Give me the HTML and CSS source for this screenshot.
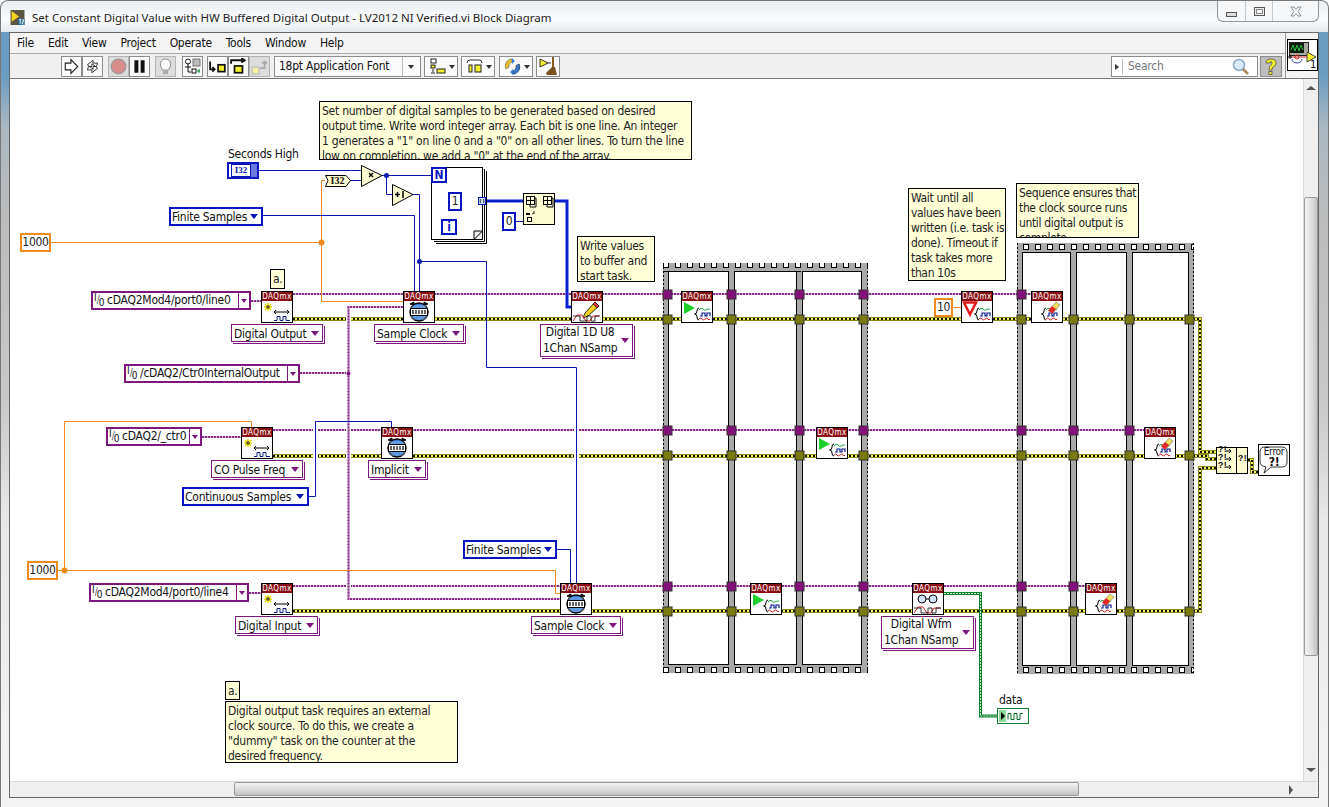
FILE: index.html
```html
<!DOCTYPE html>
<html lang="en">
<head>
    <meta charset="UTF-8">
    <title>Set Constant Digital Value with HW Buffered Digital Output - LV2012 NI Verified.vi Block Diagram</title>
    <link rel="stylesheet" href="styles.css">
</head>
<body>
<!-- shared icons -->
<svg class="defs" width="0" height="0">
    <defs>
        <pattern id="film" width="12" height="9" patternUnits="userSpaceOnUse">
            <rect width="12" height="9" fill="#a9a9a9"/>
            <rect x="3.500" y="1.500" width="5" height="5" fill="#fff" stroke="#000"/>
        </pattern>
        <symbol id="i-create" viewBox="0 0 30 21">
            <path d="M6 2v8M2 6h8M3 3l6 6M9 3l-6 6" stroke="#e8d800" stroke-width="1.500"/>
            <path d="M6 4v4M4 6h4" stroke="#333"/>
            <path d="M12 11h15M14 9l-2 2 2 2M25 9l2 2-2 2" fill="none" stroke="#000"/>
            <path d="M12 19.500h3v-4h3v4h3v-4h3v4h4" fill="none" stroke="#0a1a80"/>
        </symbol>
        <symbol id="i-clock" viewBox="0 0 30 21">
            <path d="M6 3l4-2v3zM24 3l-4-2v3z" fill="#000" stroke="#000"/>
            <circle cx="15" cy="11" r="9" fill="#2f78d8" stroke="#000" stroke-width="1.500"/>
            <path d="M8 5h14M6 7h18M6 16h18M8 18h14" stroke="#bcd8f8" stroke-width=".7"/>
            <rect x="6.500" y="7.500" width="17" height="7" fill="#fff" stroke="#000"/>
            <path d="M9 9v4M12 9v4M15 9v4M18 9v4M21 9v4" stroke="#000" stroke-width="1.200"/>
        </symbol>
        <symbol id="i-write" viewBox="0 0 30 21">
            <path d="M23 1l4 4-11 10-5 2 2-5z" fill="#f0d020" stroke="#000" stroke-width=".8"/>
            <path d="M21 3l4 4 2-2-4-4z" fill="#e03030" stroke="#000" stroke-width=".6"/>
            <path d="M1 20l4-6h5l4 6h4l3-5h6" fill="none" stroke="#d02020"/>
            <path d="M1 15h7v5h7v-5h4v5h4v-5h5" fill="none" stroke="#000" stroke-width=".8"/>
        </symbol>
        <symbol id="i-wave" viewBox="0 0 30 21">
            <path d="M17 7q-2 0-2 3 0 3-2.500 3 2.500 0 2.500 3 0 3 2 3" fill="none" stroke="#000"/>
            <path d="M17 9q2-3 4-1t3 1 4-1" fill="none" stroke="#20a040"/>
            <path d="M18 15h2v-3h3v3h2v-3h3v3" fill="none" stroke="#0a1a90" stroke-width="1.200"/>
            <path d="M17 18q2-2 3 0t3 0 3 0 2 0" fill="none" stroke="#d02020"/>
        </symbol>
        <symbol id="i-start" viewBox="0 0 30 21">
            <path d="M2 1l11 6-11 6z" fill="#1ed02c"/>
            <use href="#i-wave" width="30" height="21"/>
        </symbol>
        <symbol id="i-wait" viewBox="0 0 30 21">
            <path d="M2 1.500h12l-6 12z" fill="#fff" stroke="#e01818" stroke-width="2.500"/>
            <use href="#i-wave" width="30" height="21"/>
        </symbol>
        <symbol id="i-stop" viewBox="0 0 30 21">
            <use href="#i-wave" x="-3" width="30" height="21"/>
            <path d="M24 1l4 3-7 8-4-3z" fill="#f0e060" stroke="#555" stroke-width=".5"/>
            <path d="M20 5l4 3-4 4.500-4-3z" fill="#e02828"/>
        </symbol>
        <symbol id="i-read" viewBox="0 0 30 21">
            <circle cx="9" cy="6" r="4" fill="#cfe4f6" stroke="#000"/>
            <circle cx="20" cy="6" r="4" fill="#cfe4f6" stroke="#000"/>
            <path d="M13 6h3" stroke="#000"/>
            <path d="M1 20l4-6h5l4 6h4l3-5h7" fill="none" stroke="#d02020"/>
            <path d="M1 15h7v5h7v-5h4v5h4v-5h5" fill="none" stroke="#000" stroke-width=".8"/>
        </symbol>
    </defs>
</svg>

<div class="window">
    <header class="titlebar">
        <svg class="app-icon" width="15" height="15" viewBox="0 0 13 14">
            <rect width="13" height="14" fill="#5a5440"/>
            <path d="M1 1l7 5-7 5z" fill="#f2d21c"/>
            <rect x="7" y="8" width="6" height="6" fill="#2a6c98"/>
            <path d="M8 9h2M9 9v4M11 9h1v2h-1v2h1" stroke="#fff" stroke-width=".8" fill="none"/>
        </svg>
        <span class="title-text">Set Constant Digital Value with HW Buffered Digital Output - LV2012 NI Verified.vi Block Diagram</span>
        <div class="caption-btns">
            <div class="cap-btn cap-min"><i></i></div>
            <div class="cap-btn cap-max"><i></i></div>
            <div class="cap-btn cap-close">
                <svg width="12" height="11" viewBox="0 0 12 11"><path d="M1 1h3l2 2.500L8 1h3L8 5.500l3 4.500H8L6 7.500 4 10H1l3-4.500z" fill="#fff" stroke="#8a8f94"/></svg>
            </div>
        </div>
    </header>

    <div class="client">
        <div class="top-area">
            <div class="bars">
                <nav class="menubar">
                    <span>File</span><span>Edit</span><span>View</span><span>Project</span><span>Operate</span><span>Tools</span><span>Window</span><span>Help</span>
                </nav>
                <div class="toolbar">
                    <div class="tb-group">
                        <div class="tb-btn"><svg width="17" height="17" viewBox="0 0 15 15"><path d="M2 4.500h5V1.500l6 6-6 6v-3H2z" fill="#fff" stroke="#222"/></svg></div>
                        <div class="tb-btn"><svg width="17" height="17" viewBox="0 0 15 15"><path d="M3 6l5-4v2.500h4l-1 3H8V10zM12 9l-5 4v-2.500H3l1-3h3V5z" fill="#fff" stroke="#222" stroke-width=".8"/></svg></div>
                    </div>
                    <div class="tb-group gap-5">
                        <div class="tb-btn tb-off"><svg width="17" height="17" viewBox="0 0 15 15"><circle cx="7.500" cy="7.500" r="6.500" fill="#d98c8c" stroke="#999"/></svg></div>
                        <div class="tb-btn"><svg width="17" height="17" viewBox="0 0 15 15"><rect x="3" y="2" width="3.500" height="11" fill="#111"/><rect x="8.500" y="2" width="3.500" height="11" fill="#111"/></svg></div>
                    </div>
                    <div class="tb-group gap-5">
                        <div class="tb-btn tb-off"><svg width="13" height="17" viewBox="0 0 13 17"><path d="M2.500 10C0 6 2 1 6.500 1S13 6 10.500 10L9.500 12h-6z" fill="#fff" stroke="#888"/><path d="M4 13h5v3H4z" fill="#aaa"/></svg></div>
                    </div>
                    <div class="tb-group gap-6">
                        <div class="tb-btn"><svg width="17" height="17" viewBox="0 0 17 17"><circle cx="4" cy="3.500" r="2.500" fill="#fff" stroke="#111"/><path d="M4 6v8h3M1 9h6" stroke="#111" fill="none"/><rect x="9" y="1" width="7" height="7" fill="#bbb" stroke="#777"/><rect x="8" y="11" width="4" height="4" fill="#fff" stroke="#111"/><path d="M13 13h3M15 11v4" stroke="#0a9030"/></svg></div>
                    </div>
                    <div class="tb-group gap-4">
                        <div class="tb-btn"><svg width="17" height="17" viewBox="0 0 15 15"><path d="M1 3v7h4M3 8l2 2-2 2" fill="none" stroke="#111" stroke-width="1.600"/><rect x="8" y="6" width="6" height="6" fill="#f2ee30" stroke="#111" stroke-width="1.500"/></svg></div>
                        <div class="tb-btn"><svg width="17" height="17" viewBox="0 0 15 15"><path d="M1 5V2h11M10 0l3 2-3 2" fill="none" stroke="#111" stroke-width="1.600"/><rect x="4" y="7" width="7" height="6" fill="#f2ee30" stroke="#111" stroke-width="1.500"/></svg></div>
                        <div class="tb-btn tb-off"><svg width="17" height="17" viewBox="0 0 15 15"><rect x="1" y="8" width="6" height="6" fill="#f4f2a0" stroke="#bbb"/><path d="M8 9h4V3M10 5l2-2 2 2" fill="none" stroke="#aaa" stroke-width="1.500"/></svg></div>
                    </div>
                    <div class="font-select gap-4">
                        <span class="font-name">18pt Application Font</span>
                        <span class="font-arrow"></span>
                    </div>
                    <div class="tb-btn tb-drop gap-3"><svg width="19" height="17" viewBox="0 0 17 17"><rect x="2" y="1" width="5" height="4" fill="#fff" stroke="#222"/><rect x="2" y="7" width="4" height="3" fill="#f2ee30" stroke="#222"/><path d="M4 11v3M2 15h4" stroke="#222"/><rect x="8" y="11" width="8" height="4" fill="#f2ee30" stroke="#222"/></svg><b></b></div>
                    <div class="tb-btn tb-drop gap-3"><svg width="19" height="17" viewBox="0 0 17 17"><path d="M1 5q0-3 3-3h9q3 0 3 3" fill="none" stroke="#333"/><rect x="3" y="7" width="3" height="7" fill="#f2ee30" stroke="#222"/><rect x="9" y="7" width="6" height="7" fill="#f2ee30" stroke="#222"/></svg><b></b></div>
                    <div class="tb-btn tb-drop gap-4"><svg width="19" height="17" viewBox="0 0 17 17"><path d="M8 1a7 7 0 0 0-6 10l3-2a4 4 0 0 1 3-5z" fill="#f0c020" stroke="#886"/><path d="M9 16a7 7 0 0 0 6-10l-3 2a4 4 0 0 1-3 5z" fill="#3a80d8" stroke="#246"/><path d="M8 0l3 3-3 3zM9 11l-3 3 3 3z" fill="#3a80d8"/></svg><b></b></div>
                    <div class="tb-btn gap-3 tb-clean"><svg width="21" height="19" viewBox="0 0 19 19"><path d="M1 2l8 4-8 4z" fill="#f2ee30" stroke="#333"/><path d="M14 0v11" stroke="#8a5a20" stroke-width="2"/><path d="M7 16l6-6h3l2 8H8z" fill="#7a5420"/><path d="M9 6h3" stroke="#333"/></svg></div>
                    <div class="search">
                        <span class="search-arrow"></span>
                        <span class="search-text">Search</span>
                        <svg class="search-glass" width="18" height="18" viewBox="0 0 18 18"><circle cx="7" cy="7" r="5.500" fill="#dcebf8" stroke="#8aa8c4" stroke-width="1.500"/><path d="M11 11l5 5" stroke="#a58660" stroke-width="2.500"/></svg>
                    </div>
                    <div class="help-btn">
                        <svg width="16" height="18" viewBox="0 0 16 18"><path d="M3 5q0-4 5-4t5 4q0 3-3 4-1 .5-1 3H6q0-4 2-5 1-.6 1-2t-1-1.500T7 5z" fill="#f5ee2a" stroke="#554" stroke-width=".8"/><rect x="6" y="13.500" width="3" height="3" fill="#f5ee2a" stroke="#554" stroke-width=".8"/></svg>
                    </div>
                </div>
            </div>
            <div class="vi-pane">
                <div class="vi-icon">
                    <svg width="30" height="30" viewBox="0 0 30 30">
                        <rect x="1.500" y="2.500" width="19" height="13" fill="#a8a8a0" stroke="#222"/>
                        <rect x="2" y="3" width="14" height="10" fill="#101c10"/>
                        <path d="M3 10l2-5 2 6 2-6 2 6 2-6 2 5" fill="none" stroke="#29c040"/>
                        <path d="M2 17h18" stroke="#d02020"/>
                        <path d="M4 19a5 4 0 0 0 10 0" fill="none" stroke="#3040b0"/>
                        <circle cx="9" cy="17" r="2" fill="none" stroke="#c02020"/>
                        <path d="M2 15v4M0 17h4" stroke="#000"/>
                        <path d="M19 12l9 5-9 5z" fill="#f5ee2a" stroke="#444"/>
                    </svg>
                    <span class="vi-num">1</span>
                </div>
            </div>
        </div>

        <div class="work">
            <div class="canvas">
                <div class="sheet">
                    <svg class="wires" width="1293" height="702" viewBox="10 79 1293 702">
                        <defs>
                            <path id="p-task" d="M251 301H261M293 294H1031M273 430H1144M293 586H1085M202 437H241M249 593H261M300 373H348"/>
                            <path id="p-err" d="M293 319H1200V452H1216M273 456H1207V459H1216M293 611H1200V468H1216M1248 460H1252V472H1258"/>
                        </defs>

                        <!-- flat sequence 1 -->
                        <rect x="663" y="263" width="205" height="410" fill="#a9a9a9"/>
                        <rect x="663" y="263" width="205" height="9" fill="url(#film)"/>
                        <rect x="663" y="664" width="205" height="9" fill="url(#film)"/>
                        <rect class="frame" x="668.500" y="271.500" width="60" height="393"/>
                        <rect class="frame" x="734.500" y="271.500" width="62" height="393"/>
                        <rect class="frame" x="802.500" y="271.500" width="59" height="393"/>
                        <path class="film-edge" d="M663.500 263V673M867.500 263V673"/>

                        <!-- flat sequence 2 -->
                        <rect x="1017" y="243" width="177" height="431" fill="#a9a9a9"/>
                        <rect x="1017" y="243" width="177" height="9" fill="url(#film)"/>
                        <rect x="1017" y="665" width="177" height="9" fill="url(#film)"/>
                        <rect class="frame" x="1022.500" y="252.500" width="48" height="413"/>
                        <rect class="frame" x="1076.500" y="252.500" width="50" height="413"/>
                        <rect class="frame" x="1132.500" y="252.500" width="56" height="413"/>
                        <path class="film-edge" d="M1017.500 243V674M1193.500 243V674"/>

                        <!-- task and error wires -->
                        <use href="#p-task" class="w-task-a"/>
                        <use href="#p-task" class="w-task-b"/>
                        <use href="#p-err" class="w-err-a"/>
                        <use href="#p-err" class="w-err-b"/>
                        <use href="#p-err" class="w-err-c"/>

                        <path class="w-gap" d="M348.500 310V596M315.500 424V494M576.500 370V581"/>
                        <path class="w-task-a" d="M403 307H348.500V599H561"/>
                        <path class="w-task-b" d="M403 307H348.500V599H561"/>
                        <circle cx="348.500" cy="373.500" r="2" fill="#7d167d"/>

                        <!-- numeric wires -->
                        <path class="w-orange" d="M50 242.500H321M325 180.500H321.500V301.500H403M58 570.500H555.500V593.500H560M64.500 570V421.500H251.500V427"/>
                        <circle cx="321.500" cy="242.500" r="3" fill="#f08a1c"/>
                        <circle cx="64.500" cy="570.500" r="3" fill="#f08a1c"/>
                        <path class="w-orange" d="M953 307.500H961"/>
                        <path class="w-blue" d="M258 170.500H361M350 180.500H361M382 175.500H431M386.500 175V194.500H392M413 194.500H419.500V291M262 215.500H414.500V291M419 261.500H486.500V367.500H576.500V583M461 201.500H478M515 221.500H523M309 496.500H315.500V421.500H391.500V427M557 549.500H570.500V583"/>
                        <circle cx="386.500" cy="175.500" r="2.500" fill="#0a14b0"/>
                        <circle cx="419.500" cy="261.500" r="2.500" fill="#0a14b0"/>
                        <path class="w-blue-thick" d="M486 201H523M554 201H567V307H571"/>
                        <path class="w-green" d="M944 593.500H980.500V716H997"/>
                        <path class="w-green-c" d="M944 593.500H980.500V716H997"/>

                        <!-- tunnels -->
                        <g class="t-task">
                            <rect x="663" y="290" width="9" height="9"/><rect x="727" y="290" width="9" height="9"/><rect x="795" y="290" width="9" height="9"/><rect x="859" y="290" width="9" height="9"/>
                            <rect x="663" y="426" width="9" height="9"/><rect x="727" y="426" width="9" height="9"/><rect x="795" y="426" width="9" height="9"/><rect x="859" y="426" width="9" height="9"/>
                            <rect x="663" y="582" width="9" height="9"/><rect x="727" y="582" width="9" height="9"/><rect x="795" y="582" width="9" height="9"/><rect x="859" y="582" width="9" height="9"/>
                            <rect x="1017" y="290" width="9" height="9"/>
                            <rect x="1017" y="426" width="9" height="9"/><rect x="1069" y="426" width="9" height="9"/><rect x="1125" y="426" width="9" height="9"/>
                            <rect x="1017" y="582" width="9" height="9"/><rect x="1069" y="582" width="9" height="9"/>
                        </g>
                        <g class="t-err">
                            <rect x="663" y="315" width="9" height="9"/><rect x="727" y="315" width="9" height="9"/><rect x="795" y="315" width="9" height="9"/><rect x="859" y="315" width="9" height="9"/>
                            <rect x="663" y="451" width="9" height="9"/><rect x="727" y="451" width="9" height="9"/><rect x="795" y="451" width="9" height="9"/><rect x="859" y="451" width="9" height="9"/>
                            <rect x="663" y="607" width="9" height="9"/><rect x="727" y="607" width="9" height="9"/><rect x="795" y="607" width="9" height="9"/><rect x="859" y="607" width="9" height="9"/>
                            <rect x="1017" y="315" width="9" height="9"/><rect x="1069" y="315" width="9" height="9"/><rect x="1125" y="315" width="9" height="9"/><rect x="1185" y="315" width="9" height="9"/>
                            <rect x="1017" y="451" width="9" height="9"/><rect x="1069" y="451" width="9" height="9"/><rect x="1125" y="451" width="9" height="9"/><rect x="1185" y="451" width="9" height="9"/>
                            <rect x="1017" y="607" width="9" height="9"/><rect x="1069" y="607" width="9" height="9"/><rect x="1125" y="607" width="9" height="9"/><rect x="1185" y="607" width="9" height="9"/>
                        </g>

                        <!-- primitives -->
                        <path class="prim" d="M361.500 165.500V186.500L382 175.500Z"/>
                        <path d="M369 173l4 4M373 173l-4 4" stroke="#000" stroke-width="1.300"/>
                        <path class="prim" d="M392.500 184.500V205.500L413 194.500Z"/>
                        <path d="M395 194.500h5M397.500 192v5M403 191v7" stroke="#000" stroke-width="1.500"/>
                        <path class="conv" d="M325.500 175.500H346L350.500 180.500L346 186.500H325.500L328 180.500Z"/>

                        <!-- for loop -->
                        <path class="loop-back" d="M436 243.500H486.500V171"/>
                        <path class="loop-back" d="M434 241.500H484.500V169"/>
                        <rect class="loop" x="431.500" y="167.500" width="51" height="72"/>
                        <path class="loop-curl" d="M474 239.500L482.500 231V239.500ZM474 239.500V231H482.500"/>
                        <rect x="478.500" y="197.500" width="7" height="7" fill="#c8dcf0" stroke="#0a14b0"/>
                        <path d="M481 199.500h-.7v3h.7M483 199.500h.7v3H483" stroke="#000" stroke-width=".7" fill="none"/>

                        <!-- build array / insert -->
                        <rect x="523.500" y="193.500" width="31" height="31" fill="#fdfbd0" stroke="#000"/>
                        <g fill="none" stroke="#000">
                            <rect x="526.500" y="196.500" width="8" height="8"/><path d="M530.500 196.500v8M526.500 200.500h8M534 198h2v9h-6v-2"/>
                            <rect x="543.500" y="196.500" width="8" height="8"/><path d="M547.500 196.500v8M543.500 200.500h8M551 198h2v9h-6v-2"/>
                            <rect x="527.500" y="217.500" width="4" height="4"/>
                        </g>
                        <rect x="526" y="213" width="4" height="2" fill="#000"/>
                        <path d="M532 214l2-1M534 211v3" stroke="#000" stroke-width=".8"/>

                        <!-- merge errors -->
                        <rect x="1216.500" y="447.500" width="31" height="26" fill="#fdfbd0" stroke="#000"/>
                        <path d="M1236.500 447.500V473" stroke="#000"/>
                        <path d="M1226 451h5M1229 449l2 2-2 2M1226 459h5M1229 457l2 2-2 2M1226 467h5M1229 465l2 2-2 2" fill="none" stroke="#000"/>

                        <!-- error dialog -->
                        <rect x="1258.500" y="444.500" width="31" height="31" fill="#fff" stroke="#000"/>
                        <path d="M1265 447H1282Q1287 447 1287 452V462Q1287 467 1282 467H1271L1264 473L1266 467Q1260 466 1260 462V452Q1260 447 1265 447Z" fill="#fff" stroke="#000" stroke-width=".8"/>
                    </svg>

                    <!-- comments -->
                    <div class="note note-samples">Set number of digital samples to be generated based on desired<br>output time. Write word integer array. Each bit is one line. An integer<br>1 generates a "1" on line 0 and a "0" on all other lines. To turn the line<br>low on completion, we add a "0" at the end of the array.</div>
                    <div class="note note-write">Write values<br>to buffer and<br>start task.</div>
                    <div class="note note-wait">Wait until all<br>values have been<br>written (i.e. task is<br>done). Timeout if<br>task takes more<br>than 10s</div>
                    <div class="note note-seq">Sequence ensures that<br>the clock source runs<br>until digital output is<br>complete</div>
                    <div class="note note-a1">a.</div>
                    <div class="note note-a2">a.</div>
                    <div class="note note-dummy">Digital output task requires an external<br>clock source. To do this, we create a<br>"dummy" task on the counter at the<br>desired frequency.</div>

                    <!-- free labels -->
                    <div class="label lab-seconds">Seconds High</div>
                    <div class="label lab-data">data</div>

                    <!-- controls and constants -->
                    <div class="ctl-i32"><span>I32</span><i></i></div>
                    <div class="conv-text">I32</div>
                    <div class="num num-o c-1000a">1000</div>
                    <div class="num num-o c-1000b">1000</div>
                    <div class="num num-o c-10">10</div>
                    <div class="num num-b c-n">N</div>
                    <div class="num num-b c-i">i</div>
                    <div class="num num-b c-one">1</div>
                    <div class="num num-b c-zero">0</div>

                    <div class="enum e-finite1">Finite Samples<b></b></div>
                    <div class="enum e-cont">Continuous Samples<b></b></div>
                    <div class="enum e-finite2">Finite Samples<b></b></div>

                    <div class="io io-line0"><span class="io-mark"><span>I</span><s>/</s><sub>0</sub></span>cDAQ2Mod4/port0/line0<u></u></div>
                    <div class="io io-ctr"><span class="io-mark"><span>I</span><s>/</s><sub>0</sub></span>/cDAQ2/Ctr0InternalOutput<u></u></div>
                    <div class="io io-ctr0"><span class="io-mark"><span>I</span><s>/</s><sub>0</sub></span>cDAQ2/_ctr0<u></u></div>
                    <div class="io io-line4"><span class="io-mark"><span>I</span><s>/</s><sub>0</sub></span>cDAQ2Mod4/port0/line4<u></u></div>

                    <div class="poly p-do">Digital Output<b></b></div>
                    <div class="poly p-sc1">Sample Clock<b></b></div>
                    <div class="poly p-co">CO Pulse Freq<b></b></div>
                    <div class="poly p-imp">Implicit<b></b></div>
                    <div class="poly p-di">Digital Input<b></b></div>
                    <div class="poly p-sc2">Sample Clock<b></b></div>
                    <div class="poly poly-two p-w1d"><span class="poly-lines"><span>Digital 1D U8</span><span>1Chan NSamp</span></span><b></b></div>
                    <div class="poly poly-two p-wfm"><span class="poly-lines"><span>Digital Wfm</span><span>1Chan NSamp</span></span><b></b></div>

                    <!-- DAQmx nodes -->
                    <div class="daq n-create1"><div class="daq-head">DAQmx</div><svg width="30" height="21"><use href="#i-create"/></svg></div>
                    <div class="daq n-clock1"><div class="daq-head">DAQmx</div><svg width="30" height="21"><use href="#i-clock"/></svg></div>
                    <div class="daq n-write"><div class="daq-head">DAQmx</div><svg width="30" height="21"><use href="#i-write"/></svg></div>
                    <div class="daq n-start1"><div class="daq-head">DAQmx</div><svg width="30" height="21"><use href="#i-start"/></svg></div>
                    <div class="daq n-wait"><div class="daq-head">DAQmx</div><svg width="30" height="21"><use href="#i-wait"/></svg></div>
                    <div class="daq n-stop1"><div class="daq-head">DAQmx</div><svg width="30" height="21"><use href="#i-stop"/></svg></div>
                    <div class="daq n-create2"><div class="daq-head">DAQmx</div><svg width="30" height="21"><use href="#i-create"/></svg></div>
                    <div class="daq n-clock2"><div class="daq-head">DAQmx</div><svg width="30" height="21"><use href="#i-clock"/></svg></div>
                    <div class="daq n-start2"><div class="daq-head">DAQmx</div><svg width="30" height="21"><use href="#i-start"/></svg></div>
                    <div class="daq n-stop2"><div class="daq-head">DAQmx</div><svg width="30" height="21"><use href="#i-stop"/></svg></div>
                    <div class="daq n-create3"><div class="daq-head">DAQmx</div><svg width="30" height="21"><use href="#i-create"/></svg></div>
                    <div class="daq n-clock3"><div class="daq-head">DAQmx</div><svg width="30" height="21"><use href="#i-clock"/></svg></div>
                    <div class="daq n-start3"><div class="daq-head">DAQmx</div><svg width="30" height="21"><use href="#i-start"/></svg></div>
                    <div class="daq n-read"><div class="daq-head">DAQmx</div><svg width="30" height="21"><use href="#i-read"/></svg></div>
                    <div class="daq n-stop3"><div class="daq-head">DAQmx</div><svg width="30" height="21"><use href="#i-stop"/></svg></div>

                    <div class="merge-text mt-1">?!</div>
                    <div class="merge-text mt-2">?!</div>
                    <div class="merge-text mt-3">?!</div>
                    <div class="merge-text mt-4">?!</div>
                    <div class="err-text">Error<br><strong>?!</strong></div>
                    <div class="data-ind"><svg width="30" height="14" viewBox="0 0 30 14"><rect x="1" y="1" width="7" height="12" fill="#8fd89a"/><path d="M3 3l4 4-4 4z" fill="#000"/><path d="M10 10.500v-6h3v6h3v-6h3v6h3v-6h3" fill="none" stroke="#0a6a20"/></svg></div>
                </div>
            </div>
            <div class="vscroll">
                <div class="sb-arrow sb-up"></div>
                <div class="vtrack"><div class="vthumb"></div></div>
                <div class="sb-arrow sb-down"></div>
            </div>
        </div>

        <div class="hscroll">
            <div class="htrack"><div class="hthumb"></div></div>
            <div class="sb-arrow sb-right"></div>
            <div class="grip"></div>
        </div>
    </div>
</div>
</body>
</html>
```

FILE: styles.css
```css
* {
    box-sizing: border-box;
}
html, body {
    margin: 0;
    padding: 0;
    background: #fff;
}
body {
    width: 1329px;
    height: 807px;
    overflow: hidden;
    font-family: "DejaVu Sans Condensed", "Noto Sans", sans-serif;
    font-size: 12px;
    letter-spacing: -.25px;
    color: #111;
}
.defs {
    position: absolute;
}

/* window frame */
.window {
    width: 1329px;
    height: 807px;
    border: 1px solid #777;
    border-bottom: 0;
    border-radius: 8px 8px 0 0;
    display: flex;
    flex-direction: column;
    overflow: hidden;
    background: linear-gradient(180deg, #6b9cc2 0, #6b9cc2 75px, #aab8c2 125px, #bcbcbc 220px, #c8c8c8 400px, #e8e8e8 520px, #f4f4f4 100%);
}
.titlebar {
    height: 31px;
    flex: none;
    display: flex;
    align-items: flex-start;
    padding: 9px 0 0 9px;
    background: linear-gradient(180deg, #e9eef2 0, #fafbfc 60%, #e4eaef 100%);
    position: relative;
}
.title-text {
    font-family: "Noto Sans", sans-serif;
    font-size: 11.500px;
    letter-spacing: 0;
    line-height: 15px;
    margin-left: 7px;
    color: #222;
}
.app-icon {
    flex: none;
}
.caption-btns {
    position: absolute;
    top: 0;
    right: 9px;
    width: 102px;
    height: 21px;
    display: flex;
    border: 1px solid #8f959a;
    border-top: 0;
    border-radius: 0 0 6px 6px;
    background: #f6f7f8;
}
.cap-btn {
    display: flex;
    align-items: center;
    justify-content: center;
    border-right: 1px solid #c4c8cc;
}
.cap-min {
    width: 28px;
}
.cap-max {
    width: 27px;
}
.cap-close {
    flex: 1;
    border-right: 0;
}
.cap-min i {
    width: 11px;
    height: 5px;
    margin-top: 6px;
    border: 1px solid #555;
    background: #ddd;
}
.cap-max i {
    width: 11px;
    height: 9px;
    border: 1px solid #555;
    box-shadow: inset 0 0 0 1px #eee, inset 0 0 0 2px #888;
}

/* client area */
.client {
    width: 1310px;
    height: 766px;
    margin-left: 8px;
    border: 1px solid #666;
    background: #f0f0f0;
    flex: none;
    display: flex;
    flex-direction: column;
}
.top-area {
    height: 46px;
    flex: none;
    display: flex;
    border-bottom: 1px solid #777;
}
.bars {
    flex: 1;
    min-width: 0;
}
.menubar {
    height: 21px;
    display: flex;
    gap: 14px;
    padding: 2px 0 0 7px;
    background: #f4f4f4;
    border-bottom: 1px solid #a9a9a9;
    line-height: 17px;
}
.toolbar {
    height: 24px;
    display: flex;
    align-items: flex-start;
    padding: 2px 3px 0 51px;
    background: #f0f0f0;
}
.tb-group {
    display: flex;
}
.gap-3 {
    margin-left: 3px;
}
.gap-4 {
    margin-left: 4px;
}
.gap-5 {
    margin-left: 5px;
}
.gap-6 {
    margin-left: 6px;
}
.tb-btn {
    width: 21px;
    height: 21px;
    border: 1px solid #8c8c8c;
    background: #fafafa;
    display: flex;
    align-items: center;
    justify-content: center;
}
.tb-off {
    background: #dcdcdc;
    border-color: #b4b4b4;
}
.tb-drop {
    width: 34px;
    justify-content: flex-start;
    padding-left: 3px;
    gap: 2px;
}
.tb-drop b {
    width: 0;
    height: 0;
    border: 3px solid transparent;
    border-top: 4px solid #333;
    border-bottom: 0;
}
.tb-clean {
    width: 24px;
}
.font-select {
    width: 147px;
    height: 21px;
    border: 1px solid #8c8c8c;
    background: #fafafa;
    display: flex;
    align-items: center;
}
.font-name {
    width: 128px;
    padding-left: 4px;
    white-space: nowrap;
    border-right: 1px solid #bbb;
    line-height: 19px;
}
.font-arrow {
    width: 0;
    height: 0;
    margin-left: 5px;
    border: 3px solid transparent;
    border-top: 4px solid #333;
    border-bottom: 0;
}
.search {
    width: 147px;
    height: 21px;
    margin-left: auto;
    border: 1px solid #8c8c8c;
    background: #fff;
    display: flex;
    align-items: center;
}
.search-arrow {
    width: 0;
    height: 0;
    margin: 0 0 0 3px;
    border: 3px solid transparent;
    border-left: 4px solid #333;
    border-right: 0;
}
.search-text {
    margin-left: 3px;
    padding-left: 5px;
    border-left: 1px solid #bbb;
    color: #777;
    line-height: 15px;
}
.search-glass {
    margin-left: auto;
    margin-right: 7px;
}
.help-btn {
    width: 22px;
    height: 21px;
    margin-left: 2px;
    border: 1px solid #8c8c8c;
    background: #bdbdbd;
    display: flex;
    align-items: center;
    justify-content: center;
}
.vi-pane {
    width: 33px;
    flex: none;
    border-left: 1px solid #999;
    padding: 6px 0 0 1px;
    background: #f4f4f4;
}
.vi-icon {
    width: 31px;
    height: 32px;
    border: 1px solid #000;
    background: #fff;
    position: relative;
}
.vi-num {
    position: absolute;
    right: 1px;
    bottom: 0;
    font-size: 11px;
    line-height: 11px;
}

/* work area */
.work {
    flex: 1;
    min-height: 0;
    display: flex;
}
.canvas {
    flex: 1;
    position: relative;
    overflow: hidden;
    background: #fff;
}
.vscroll {
    width: 15px;
    flex: none;
    display: flex;
    flex-direction: column;
    background: #efefef;
    border-left: 1px solid #d8d8d8;
}
.sb-arrow {
    flex: none;
    display: flex;
}
.sb-up {
    height: 4px;
    margin: 7px 0 0 2px;
    width: 0;
    border: 5px solid transparent;
    border-bottom: 4px solid #555;
    border-top: 0;
}
.sb-down {
    height: 4px;
    width: 0;
    margin: 0 0 9px 2px;
    border: 5px solid transparent;
    border-top: 4px solid #555;
    border-bottom: 0;
}
.vtrack {
    flex: 1;
    padding-top: 107px;
}
.vthumb {
    height: 459px;
    border: 1px solid #9a9a9a;
    border-radius: 2px;
    background: linear-gradient(90deg, #f4f4f4, #dedede 55%, #c4c4c4);
}
.hscroll {
    height: 16px;
    flex: none;
    display: flex;
    align-items: stretch;
    background: #efefef;
    border-top: 1px solid #d8d8d8;
}
.htrack {
    flex: 1;
    padding: 0 0 1px 224px;
}
.hthumb {
    width: 845px;
    height: 100%;
    border: 1px solid #9a9a9a;
    border-radius: 2px;
    background: linear-gradient(180deg, #f2f2f2, #dcdcdc 55%, #c2c2c2);
}
.sb-right {
    width: 0;
    height: 0;
    margin: 3px 10px 0 0;
    border: 5px solid transparent;
    border-left: 4px solid #555;
    border-right: 0;
}
.grip {
    width: 15px;
}

/* diagram: page coordinates, shifted by the canvas origin */
.sheet {
    position: absolute;
    left: -10px;
    top: -79px;
    width: 1329px;
    height: 807px;
}
.sheet > * {
    position: absolute;
}
.wires {
    left: 10px;
    top: 79px;
}
.frame {
    fill: #fff;
    stroke: #000;
}
.film-edge {
    fill: none;
    stroke: #000;
    stroke-dasharray: 2 2;
}
.w-task-a {
    fill: none;
    stroke: #cdb0cd;
    stroke-width: 2;
}
.w-task-b {
    fill: none;
    stroke: #8a2a8a;
    stroke-width: 2;
    stroke-dasharray: 2 1;
}
.w-err-a {
    fill: none;
    stroke: #8a8a18;
    stroke-width: 4;
}
.w-err-b {
    fill: none;
    stroke: #f0f060;
    stroke-width: 2;
}
.w-err-c {
    fill: none;
    stroke: #111;
    stroke-width: 2;
    stroke-dasharray: 2 2;
}
.w-gap {
    fill: none;
    stroke: #fff;
    stroke-width: 5;
}
.w-orange {
    fill: none;
    stroke: #f08a1c;
}
.w-blue {
    fill: none;
    stroke: #0a14b0;
}
.w-blue-thick {
    fill: none;
    stroke: #0a20d0;
    stroke-width: 3;
}
.w-green {
    fill: none;
    stroke: #0a8030;
    stroke-width: 3;
}
.w-green-c {
    fill: none;
    stroke: #c8f0c8;
    stroke-width: 1;
    stroke-dasharray: 2 1;
}
.t-task rect {
    fill: #84107c;
    stroke: #333;
}
.t-err rect {
    fill: #7a7a10;
    stroke: #333;
}
.prim {
    fill: #fdfbd0;
    stroke: #000;
}
.conv {
    fill: #fdfbd0;
    stroke: #000;
}
.loop {
    fill: #fff;
    stroke: #000;
}
.loop-back {
    fill: none;
    stroke: #000;
}
.loop-curl {
    fill: #eee;
    stroke: #000;
}

/* comments */
.note {
    background: #ffffd8;
    border: 1px solid #000;
    padding: 2px 0 0 2px;
    line-height: 15px;
    overflow: hidden;
    white-space: nowrap;
    color: #222;
}
.note-samples {
    left: 319px;
    top: 101px;
    width: 373px;
    height: 59px;
}
.note-write {
    left: 577px;
    top: 236px;
    width: 78px;
    height: 46px;
}
.note-wait {
    left: 908px;
    top: 188px;
    width: 98px;
    height: 93px;
    letter-spacing: -.35px;
}
.note-seq {
    left: 1016px;
    top: 183px;
    width: 123px;
    height: 55px;
    letter-spacing: -.35px;
}
.note-a1 {
    left: 270px;
    top: 269px;
    width: 15px;
    height: 20px;
    padding: 2px;
}
.note-a2 {
    left: 225px;
    top: 681px;
    width: 15px;
    height: 19px;
    padding: 2px;
}
.note-dummy {
    left: 225px;
    top: 701px;
    width: 233px;
    height: 62px;
}
.label {
    line-height: 15px;
}
.lab-seconds {
    left: 228px;
    top: 147px;
}
.lab-data {
    left: 999px;
    top: 693px;
}

/* constants */
.ctl-i32 {
    left: 227px;
    top: 162px;
    width: 32px;
    height: 17px;
    border: 2px solid #0a14c0;
    background: #fff;
    display: flex;
    align-items: center;
    padding-left: 2px;
}
.ctl-i32 span {
    font: bold 9px/11px "Liberation Serif", serif;
    letter-spacing: 0;
    color: #0a14b0;
    width: 20px;
    border: 1px solid #0a14b0;
    text-align: center;
}
.ctl-i32 i {
    width: 6px;
    height: 13px;
    background: #6a78e0;
}
.conv-text {
    left: 325px;
    top: 175px;
    width: 25px;
    text-align: center;
    letter-spacing: 0;
    font: bold 10px/12px "Liberation Serif", serif;
}
.num {
    background: #fff;
    text-align: center;
    line-height: 15px;
}
.num-o {
    border: 2px solid #f08a1c;
    color: #222;
}
.num-b {
    border: 2px solid #0a14c0;
    color: #222;
}
.c-1000a {
    left: 20px;
    top: 233px;
    width: 31px;
    height: 19px;
}
.c-1000b {
    left: 27px;
    top: 561px;
    width: 31px;
    height: 19px;
}
.c-10 {
    left: 934px;
    top: 298px;
    width: 19px;
    height: 19px;
}
.c-n {
    left: 431px;
    top: 167px;
    width: 16px;
    height: 16px;
    line-height: 12px;
    font-weight: bold;
    color: #0a14c0;
}
.c-i {
    left: 441px;
    top: 219px;
    width: 16px;
    height: 16px;
    line-height: 12px;
    font-weight: bold;
    color: #0a14c0;
}
.c-one {
    left: 448px;
    top: 192px;
    width: 14px;
    height: 19px;
}
.c-zero {
    left: 502px;
    top: 212px;
    width: 14px;
    height: 19px;
}

/* enums, rings, I/O names */
.enum, .poly {
    display: flex;
    align-items: center;
    white-space: nowrap;
    background: #fff;
    padding: 2px 0 0 2px;
    line-height: 15px;
}
.enum {
    height: 19px;
    border: 2px solid #0a14c0;
    padding-left: 1px;
}
.enum b {
    margin: -2px 3px 0 auto;
    border: 4px solid transparent;
    border-top: 5px solid #0a14b0;
    border-bottom: 0;
}
.e-finite1 {
    left: 169px;
    top: 207px;
    width: 94px;
}
.e-cont {
    left: 182px;
    top: 487px;
    width: 127px;
}
.e-finite2 {
    left: 463px;
    top: 540px;
    width: 94px;
}
.poly {
    height: 18px;
    border: 1px solid #7d167d;
    box-shadow: 1px 1px 0 #fff, 2px 2px 0 #7d167d;
}
.poly b {
    margin: -2px 3px 0 auto;
    border: 4px solid transparent;
    border-top: 5px solid #7d167d;
    border-bottom: 0;
}
.poly-two {
    height: 33px;
    padding-top: 0;
}
.poly-two b {
    margin-top: 0;
}
.poly-lines {
    display: flex;
    flex-direction: column;
    align-items: center;
    line-height: 15.500px;
}
.p-do {
    left: 231px;
    top: 324px;
    width: 92px;
}
.p-sc1 {
    left: 374px;
    top: 324px;
    width: 90px;
}
.p-co {
    left: 211px;
    top: 460px;
    width: 92px;
}
.p-imp {
    left: 368px;
    top: 460px;
    width: 58px;
}
.p-di {
    left: 235px;
    top: 616px;
    width: 83px;
}
.p-sc2 {
    left: 531px;
    top: 616px;
    width: 90px;
}
.p-w1d {
    left: 540px;
    top: 324px;
    width: 93px;
}
.p-wfm {
    left: 881px;
    top: 616px;
    width: 93px;
}
.io {
    height: 19px;
    display: flex;
    align-items: center;
    white-space: nowrap;
    background: #fff;
    border: 2px solid #7d167d;
    line-height: 15px;
}
.io u {
    margin-left: auto;
    width: 11px;
    height: 100%;
    border-left: 1px solid #7d167d;
    position: relative;
}
.io u::after {
    content: "";
    position: absolute;
    left: 2px;
    top: 6px;
    border: 3px solid transparent;
    border-top: 4px solid #7d167d;
    border-bottom: 0;
}
.io-mark {
    font-size: 10px;
    letter-spacing: 0;
    line-height: 10px;
    width: 12px;
    height: 15px;
    margin-right: 2px;
    padding-left: 1px;
    display: flex;
    flex: none;
}
.io-mark s {
    text-decoration: none;
    margin: 2px -1px 0 0;
    color: #555;
}
.io-mark sub {
    font-size: 10px;
    line-height: 10px;
    align-self: flex-end;
    vertical-align: baseline;
}
.io-line0 {
    left: 91px;
    top: 291px;
    width: 160px;
}
.io-ctr {
    left: 124px;
    top: 364px;
    width: 176px;
}
.io-ctr0 {
    left: 106px;
    top: 427px;
    width: 96px;
}
.io-line4 {
    left: 89px;
    top: 583px;
    width: 160px;
}

/* DAQmx nodes */
.daq {
    width: 32px;
    height: 32px;
    border: 1px solid #000;
    background: #fff;
}
.daq-head {
    height: 9px;
    background: #8a0f14;
    color: #fff;
    font-size: 8px;
    line-height: 9px;
    text-align: center;
    white-space: nowrap;
    letter-spacing: .5px;
}
.daq svg {
    display: block;
}
.n-create1 { left: 261px; top: 291px; }
.n-clock1 { left: 403px; top: 291px; }
.n-write { left: 571px; top: 291px; }
.n-start1 { left: 681px; top: 291px; }
.n-wait { left: 961px; top: 291px; }
.n-stop1 { left: 1031px; top: 291px; }
.n-create2 { left: 241px; top: 427px; }
.n-clock2 { left: 381px; top: 427px; }
.n-start2 { left: 816px; top: 427px; }
.n-stop2 { left: 1144px; top: 427px; }
.n-create3 { left: 261px; top: 583px; }
.n-clock3 { left: 560px; top: 583px; }
.n-start3 { left: 750px; top: 583px; }
.n-read { left: 912px; top: 583px; }
.n-stop3 { left: 1085px; top: 583px; }

.merge-text {
    font: bold 9px/9px "Liberation Mono", monospace;
    letter-spacing: -1px;
}
.mt-1 { left: 1218px; top: 446px; }
.mt-2 { left: 1218px; top: 454px; }
.mt-3 { left: 1218px; top: 462px; }
.mt-4 { left: 1238px; top: 455px; }
.err-text {
    left: 1258px;
    top: 447px;
    width: 32px;
    text-align: center;
    font-size: 10px;
    line-height: 10px;
}
.err-text strong {
    font-size: 12px;
}
.data-ind {
    left: 997px;
    top: 708px;
    width: 32px;
    height: 16px;
    border: 1px solid #0a8030;
    background: #fff;
}
.data-ind svg {
    display: block;
}
```
